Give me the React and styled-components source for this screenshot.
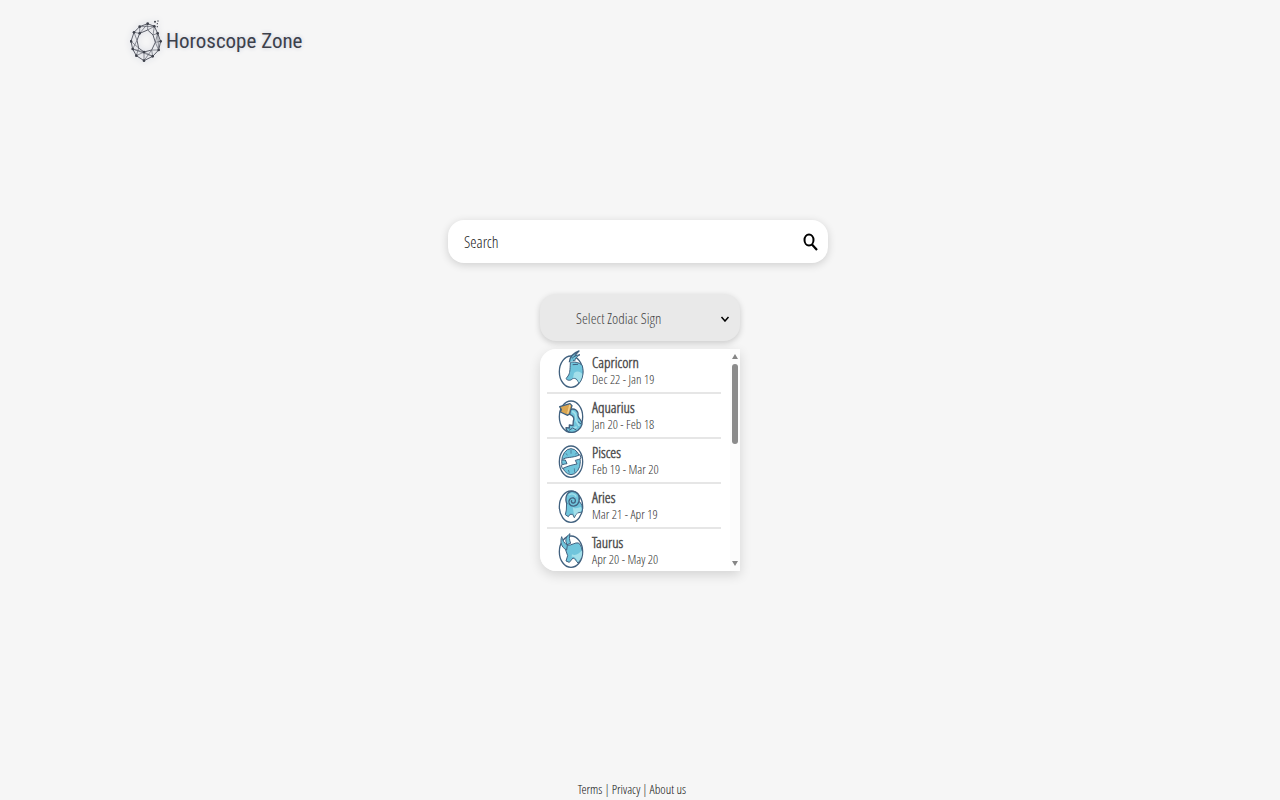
import React from "react";
import styled, { createGlobalStyle } from "styled-components";

const GlobalStyle = createGlobalStyle`
  *, *::before, *::after { box-sizing: border-box; }
  body {
    margin: 0;
    background: #f6f6f6;
    color: #333;
    font-family: "Open Sans Condensed Light", "Roboto Condensed", "Open Sans", sans-serif;
  }
  button, input, select { font: inherit; color: inherit; }
`;

const Page = styled.div`
  min-height: 100vh;
  display: flex;
  flex-direction: column;
`;

const Header = styled.header`
  display: flex;
  padding: 19px 130px 0;
`;

const Brand = styled.a`
  display: flex;
  align-items: center;
  gap: 3px;
  color: #3c404b;
  font-family: "Roboto Condensed", Roboto, sans-serif;
  font-size: 21px;
  line-height: 44px;
  text-decoration: none;
  text-shadow: 0 0 4px #c6cad8;
`;

const LogoMark = styled.svg`
  width: 33px;
  height: 44px;
  filter: drop-shadow(0 0 3px #c6cad8);
`;

const Main = styled.main`
  flex: 1;
  display: flex;
  flex-direction: column;
  padding-top: 157px;
`;

const SearchForm = styled.form`
  display: flex;
  align-items: center;
  width: 380px;
  height: 43px;
  margin-left: 35%;
  padding: 0 10px 0 16px;
  border-radius: 16px;
  background: #fff;
  box-shadow: 0 2px 8px rgba(0, 0, 0, 0.16);
`;

const SearchInput = styled.input`
  flex: 1;
  min-width: 0;
  padding: 0;
  border: 0;
  outline: 0;
  background: transparent;
  font-size: 16px;
  line-height: 20px;
  &::placeholder { color: #222; opacity: 1; }
`;

const IconButton = styled.button`
  display: flex;
  padding: 0;
  border: 0;
  background: none;
`;

const Picker = styled.div`
  align-self: center;
  width: 200px;
  margin-top: 31px;
`;

const SelectBox = styled.div`
  display: flex;
  align-items: center;
  height: 47px;
  padding: 0 10px 0 36px;
  border-radius: 16px;
  background: #e9e9e9;
  box-shadow: 0 2px 6px rgba(0, 0, 0, 0.18);
`;

const Select = styled.select`
  flex: 1;
  min-width: 0;
  padding: 0;
  border: 0;
  outline: 0;
  appearance: none;
  background: transparent;
  color: #444;
  font-size: 15px;
  line-height: 20px;
`;

const PanelShadow = styled.div`
  margin-top: 8px;
  border-radius: 16px 0 0 16px;
  box-shadow: 0 4px 12px rgba(0, 0, 0, 0.14);
`;

const Panel = styled.div`
  display: flex;
  justify-content: space-between;
  height: 222px;
  padding-left: 7px;
  overflow: hidden;
  border-radius: 16px 0 0 16px;
  background: #fff;
`;

const SignList = styled.ul`
  width: 174px;
  margin: 0;
  padding: 0;
  list-style: none;
`;

const SignItem = styled.li`
  height: 45px;
  border-bottom: 2px solid #e6e6e6;
  &:last-child { border-bottom: 0; }
`;

const SignButton = styled.button`
  display: flex;
  align-items: center;
  gap: 8px;
  width: 100%;
  padding: 0 0 0 11px;
  border: 0;
  background: none;
  text-align: left;
`;

const SignIcon = styled.svg`
  width: 26px;
  height: 39px;
  margin-top: 1px;
  overflow: visible;
`;

const SignText = styled.span`
  display: flex;
  flex-direction: column;
  padding-top: 2px;
`;

const SignName = styled.span`
  color: #555;
  font-size: 15px;
  font-weight: 700;
  line-height: 18px;
`;

const SignDates = styled.span`
  color: #333;
  font-size: 13px;
  line-height: 16px;
`;

const ScrollTrack = styled.div`
  display: flex;
  flex-direction: column;
  align-items: center;
  width: 10px;
  padding: 5px 0;
  background: #fcfcfc;
`;

const ScrollThumb = styled.div`
  flex: 0 0 80px;
  width: 6px;
  margin: 5px 0 auto;
  border-radius: 3px;
  background: #8b8b8b;
`;

const Arrow = styled.svg`
  width: 6px;
  height: 5px;
  fill: #858585;
`;

const Footer = styled.footer`
  display: flex;
  justify-content: center;
  gap: 2px;
  padding: 0 16px 3px 0;
  color: #333;
  font-size: 13px;
  line-height: 16px;
`;

const FooterLink = styled.a`
  color: #111;
  text-decoration: none;
`;

const INK = "#41617f";
const SEA = "#70c5dc";
const PALE = "#a3dfea";

const Ring = () => (
  <ellipse cx="63" cy="71" rx="35" ry="47" fill="#fff" stroke={INK} strokeWidth="4" />
);

const drawings = {
  capricorn: (
    <>
      <Ring />
      <path d="M61 44 C68 40 88 42 97 53 C102 75 98 92 87 105 C82 96 76 88 68 92 C62 98 54 99 48 92 L54 84 C60 76 60 66 61 44 Z" fill={SEA} stroke={INK} strokeWidth="3" />
      <path d="M72 75 C81 68 91 70 97 78 C96 91 91 100 87 104 C83 94 78 88 69 90 Z" fill={PALE} />
      <path d="M58 43 C59 27 68 16 87 9 C77 18 72 27 71 39" fill={SEA} stroke={INK} strokeWidth="4" strokeLinejoin="round" />
      <path d="M66 31 C73 24 82 21 90 20 C80 26 76 30 74 39" fill={SEA} stroke={INK} strokeWidth="3" strokeLinejoin="round" />
      <path d="M68 50 L84 49" fill="none" stroke={INK} strokeWidth="3" />
    </>
  ),
  aquarius: (
    <>
      <Ring />
      <path d="M59 50 C74 44 86 53 84 68 C86 80 98 82 96 94 C92 109 78 118 66 118 C56 118 48 113 48 104 L58 105 L58 96 L69 98 L70 84 C74 76 70 68 59 64 Z" fill={SEA} stroke={INK} strokeWidth="4" strokeLinejoin="round" />
      <path d="M66 55 C76 58 79 68 77 78 C77 90 87 90 87 99 M68 108 L80 101" fill="none" stroke={PALE} strokeWidth="5" />
      <path d="M57 112 L68 105 L79 111 M84 86 L93 93" fill="none" stroke={INK} strokeWidth="3" />
      <path d="M29 41 L60 32 L66 38 L59 62 L53 67 L31 57 L34 50 Z" fill="#dba650" stroke={INK} strokeWidth="4" strokeLinejoin="round" />
      <path d="M60 35 L53 62" stroke="#f4cf8b" strokeWidth="4" />
    </>
  ),
  pisces: (
    <>
      <Ring />
      <ellipse cx="63" cy="71" rx="28" ry="39" fill={SEA} stroke={INK} strokeWidth="3" />
      <path d="M37 66 C46 55 66 62 90 50 L93 60 C88 65 82 65 76 67 L81 78 C70 80 52 84 37 92 L34 82 C40 78 46 78 51 77 L46 66 Z" fill="#fff" stroke={INK} strokeWidth="3" strokeLinejoin="round" />
      <path d="M63 36 L63 47 M48 46 L52 52 M73 91 L74 104 M55 96 L58 104 M81 43 L76 49" stroke={INK} strokeWidth="2" />
    </>
  ),
  aries: (
    <>
      <Ring />
      <path d="M50 56 L49 81 L46 95 L55 101 L60 94 L68 94 L73 104 L78 94 C84 86 91 90 95 88 C101 73 94 60 86 54 Z" fill={SEA} stroke={INK} strokeWidth="3" strokeLinejoin="round" />
      <path d="M68 72 C76 80 86 73 93 72 C96 79 95 84 90 86 C82 85 79 92 73 101 Z" fill={PALE} />
      <path d="M51 64 C43 43 51 27 65 25 C83 24 91 39 87 55 C83 70 66 74 58 63 C53 53 61 43 71 45 C78 48 78 58 71 60 C65 61 62 55 66 52" fill={SEA} stroke={INK} strokeWidth="4" />
      <path d="M57 36 C65 30 75 33 79 41" fill="none" stroke={PALE} strokeWidth="4" />
    </>
  ),
  taurus: (
    <>
      <Ring />
      <path d="M50 52 C66 53 75 42 86 45 C102 61 98 87 84 105 C78 100 76 91 69 90 L58 103 L48 99 L53 83 L47 66 Z" fill={SEA} stroke={INK} strokeWidth="3" strokeLinejoin="round" />
      <path d="M66 79 C77 84 88 77 96 67 C98 83 93 95 84 102 C79 91 72 85 65 87 Z" fill={PALE} />
      <path d="M50 66 C33 58 30 41 35 26 C38 38 43 46 52 52 Z" fill={SEA} stroke={INK} strokeWidth="3" strokeLinejoin="round" />
      <path d="M51 50 C44 36 48 25 60 17 C57 27 58 36 62 46 Z" fill={SEA} stroke={INK} strokeWidth="3" strokeLinejoin="round" />
    </>
  ),
};

const signs = [
  { id: "capricorn", name: "Capricorn", dates: "Dec 22 - Jan 19" },
  { id: "aquarius", name: "Aquarius", dates: "Jan 20 - Feb 18" },
  { id: "pisces", name: "Pisces", dates: "Feb 19 - Mar 20" },
  { id: "aries", name: "Aries", dates: "Mar 21 - Apr 19" },
  { id: "taurus", name: "Taurus", dates: "Apr 20 - May 20" },
];

const logoPoints = [
  [44, 35], [68, 26], [88, 34], [98, 55], [107, 79], [101, 105],
  [83, 124], [57, 137], [34, 122], [23, 102], [18, 79], [27, 52],
];

function Logo() {
  return (
    <LogoMark viewBox="15 12 99 132" aria-hidden="true">
      <g fill="none" stroke="#5b5e68" strokeWidth="3">
        <polygon points={logoPoints.map((p) => p.join(",")).join(" ")} />
        <path d="M44 55 L68 45 L84 60 L91 82 L80 105 L57 111 L41 99 L36 76 Z" />
        <path strokeWidth="2" d="M44 35 L88 34 M44 35 L44 55 L27 52 L36 76 L23 102 L57 111 L34 122 M44 55 L68 26 L68 45 L88 34 L84 60 L98 55 L91 82 L101 105 L80 105 L57 137 L57 111 L83 124 L80 105 M18 79 L41 99 L34 122 M91 82 L107 79 M98 55 L101 105 M23 102 L83 124" />
      </g>
      <g fill="#3d404a">
        {logoPoints.map(([x, y]) => (
          <circle key={`${x}-${y}`} cx={x} cy={y} r="4" />
        ))}
        <circle cx="44" cy="55" r="4" />
        <circle cx="57" cy="111" r="4" />
        <circle cx="90" cy="20" r="3" />
        <circle cx="97" cy="26" r="2" />
        <circle cx="97" cy="35" r="2" />
        <circle cx="99" cy="18" r="2" />
      </g>
    </LogoMark>
  );
}

export default function App() {
  return (
    <Page>
      <GlobalStyle />
      <Header>
        <Brand href="#home">
          <Logo />
          Horoscope Zone
        </Brand>
      </Header>
      <Main>
        <SearchForm role="search" onSubmit={(e) => e.preventDefault()}>
          <SearchInput type="text" placeholder="Search" aria-label="Search" />
          <IconButton type="submit" aria-label="Submit search">
            <svg width="16" height="20" viewBox="0 0 16 20" fill="none" stroke="#000">
              <ellipse cx="7" cy="8" rx="4.500" ry="5.500" strokeWidth="2" />
              <path d="M10 12.500 L15 18" strokeWidth="2.200" />
            </svg>
          </IconButton>
        </SearchForm>
        <Picker>
          <SelectBox>
            <Select aria-label="Zodiac sign" defaultValue="">
              <option value="">Select Zodiac Sign</option>
              {signs.map((s) => (
                <option key={s.id} value={s.id}>{s.name}</option>
              ))}
            </Select>
            <svg width="10" height="8" viewBox="0 0 10 8" fill="none" stroke="#000" strokeWidth="1.500" aria-hidden="true">
              <path d="M1.500 3 L5 7 L8.500 3" />
            </svg>
          </SelectBox>
          <PanelShadow>
            <Panel>
              <SignList>
                {signs.map((s) => (
                  <SignItem key={s.id}>
                    <SignButton type="button">
                      <SignIcon viewBox="24 6 78 117" aria-hidden="true">{drawings[s.id]}</SignIcon>
                      <SignText>
                        <SignName>{s.name}</SignName>
                        <SignDates>{s.dates}</SignDates>
                      </SignText>
                    </SignButton>
                  </SignItem>
                ))}
              </SignList>
              <ScrollTrack aria-hidden="true">
                <Arrow viewBox="0 0 6 5"><path d="M0 5 L3 0 L6 5 Z" /></Arrow>
                <ScrollThumb />
                <Arrow viewBox="0 0 6 5"><path d="M0 0 L3 5 L6 0 Z" /></Arrow>
              </ScrollTrack>
            </Panel>
          </PanelShadow>
        </Picker>
      </Main>
      <Footer>
        <FooterLink href="#terms">Terms</FooterLink>
        <span>|</span>
        <FooterLink href="#privacy">Privacy</FooterLink>
        <span>|</span>
        <FooterLink href="#about">About us</FooterLink>
      </Footer>
    </Page>
  );
}
